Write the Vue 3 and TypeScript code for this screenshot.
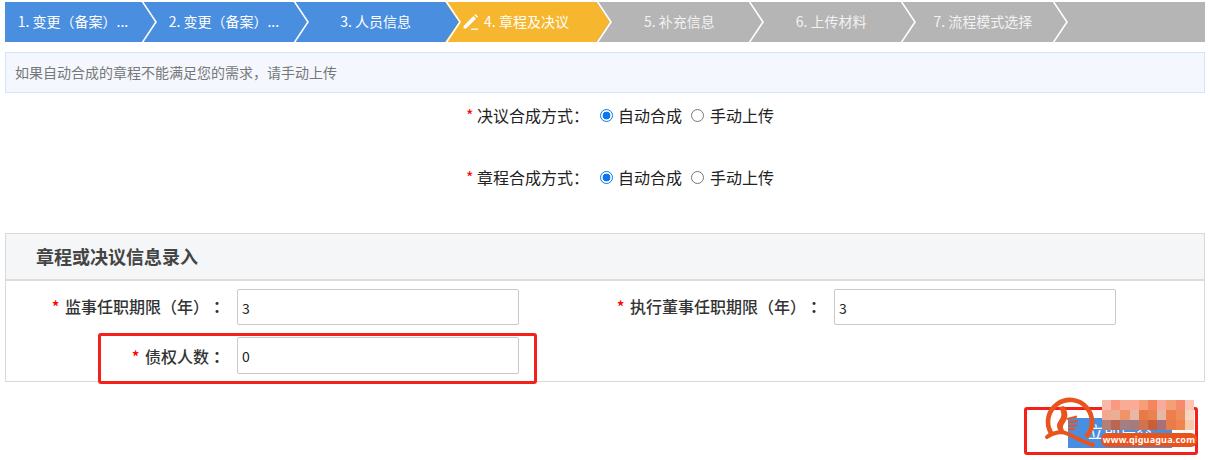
<script setup lang="ts">
interface Step { label: string; state: 'done' | 'active' | 'todo' }
const steps: Step[] = [
  { label: '1. 变更（备案）...', state: 'done' },
  { label: '2. 变更（备案）...', state: 'done' },
  { label: '3. 人员信息', state: 'done' },
  { label: '4. 章程及决议', state: 'active' },
  { label: '5. 补充信息', state: 'todo' },
  { label: '6. 上传材料', state: 'todo' },
  { label: '7. 流程模式选择', state: 'todo' },
]
const radios = ['决议合成方式：', '章程合成方式：']
const mosaic: string[] = [
  '#f9b9a8', '#f99a80', '#f9ab94', '#fbaa97', '#f59f78', '#f4855f', '#f8ab9b', '#f3a077', '#f58a6c', '#fbc4b4',
  '#f5a78e', '#e9ae96', '#f09368', '#e6b8a5', '#e87a4a', '#e9824f', '#e5b7a6', '#ee7e4b', '#f08c5c', '#fbd5bf',
  '#b47f77', '#bb6650', '#a37f85', '#a57a80', '#d07350', '#c95f38', '#a8707a', '#e87c48', '#f08450', '#f9c9ab',
]
</script>

<template>
  <div class="page">
    <div class="stepper">
      <div v-for="(s, i) in steps" :key="s.label" class="step" :class="[s.state, { first: i === 0 }]">
        <svg v-if="s.state === 'active'" class="pen" viewBox="0 0 16 16">
          <path d="M1.500 12.200 10.800 2.900l2.400 2.400-9.300 9.300H1.500z" fill="#fff" />
          <path d="M11.700 2l1-1 2.400 2.400-1 1z" fill="#fff" />
          <rect x="8.600" y="14.600" width="6.600" height="1.200" fill="#fff" />
        </svg>
        <span>{{ s.label }}</span>
        <svg class="tip" viewBox="0 0 16 40" preserveAspectRatio="none">
          <polygon points="0,0 14,20 0,40" class="tip-fill" />
          <polyline points="1,-1 15,20 1,41" fill="none" stroke="#fff" stroke-width="1.6" />
        </svg>
      </div>
      <div class="step-rest"></div>
    </div>

    <div class="notice">如果自动合成的章程不能满足您的需求，请手动上传</div>

    <div v-for="r in radios" :key="r" class="radio-row">
      <label class="radio-label"><i>*</i> {{ r }}</label>
      <span class="radio on"></span><span class="radio-text">自动合成</span>
      <span class="radio"></span><span class="radio-text">手动上传</span>
    </div>

    <section class="panel">
      <h3 class="panel-head">章程或决议信息录入</h3>
      <div class="form">
        <div class="field">
          <label class="field-label"><i>*</i> 监事任职期限（年）<b>：</b></label>
          <div class="input">3</div>
        </div>
        <div class="field">
          <label class="field-label"><i>*</i> 执行董事任职期限（年）<b>：</b></label>
          <div class="input">3</div>
        </div>
        <div class="field">
          <label class="field-label"><i>*</i> 债权人数<b>：</b></label>
          <div class="input">0</div>
        </div>
      </div>
    </section>

    <div class="actions"><button class="submit" type="button">立即提交</button></div>

    <div class="mark mark-a"></div>
    <div class="mark mark-b"></div>

    <div class="wm">
      <svg class="wm-logo" viewBox="0 0 60 60">
        <path d="M11 37A22 22 0 1 1 46 41" fill="none" stroke="#e8541c" stroke-width="4.600" />
        <path d="M7 41C13 36 22 35 28 38 36 42 44 46 53 49" fill="none" stroke="#e8541c" stroke-width="4" stroke-linecap="round" />
        <path d="M19 11l5-1c3 4 4 8 3 12-1 4-4 6-4 9 0 2 1 4 3 6l-3 1c-4-2-6-5-6-8 0-4 3-6 4-9 1-3 0-6-2-10z" fill="#e8541c" />
        <path d="M27 23l10-2.500M28 26.500l10-1.500M28 30l9-.5M28 33.500l7-.5" fill="none" stroke="#e8541c" stroke-width="2" />
      </svg>
      <div class="wm-tile">
        <span v-for="(c, i) in mosaic" :key="i" :style="{ background: c }"></span>
      </div>
      <div class="wm-pill">www.qiguagua.com</div>
    </div>
  </div>
</template>

<style scoped>
.page {
  position: relative;
  width: 1210px;
  height: 460px;
  overflow: hidden;
  padding: 2px 5px 0;
  box-sizing: border-box;
  background: #fff;
  font-family: "Noto Sans CJK SC", "Liberation Sans", sans-serif;
  font-size: 16px;
  color: #333;
  text-spacing-trim: space-all;
}
.stepper {
  display: flex;
  height: 40px;
  background: #b5b5b5;
}
.step {
  position: relative;
  width: 151.8px;
  padding: 0 0 2px 14px;
  box-sizing: border-box;
  display: flex;
  align-items: center;
  justify-content: center;
  color: #fff;
  font-size: 14px;
  flex: none;
}
.step.first { width: 136px; padding-left: 0; }
.step.done { background: #4a8ee0; --c: #4a8ee0; }
.step.active { background: #f6b62e; --c: #f6b62e; padding-right: 24px; }
.step.todo { background: #b5b5b5; --c: #b5b5b5; color: #f2f2f2; }
.step:nth-child(1) { z-index: 7; }
.step:nth-child(2) { z-index: 6; }
.step:nth-child(3) { z-index: 5; }
.step:nth-child(4) { z-index: 4; }
.step:nth-child(5) { z-index: 3; }
.step:nth-child(6) { z-index: 2; }
.step:nth-child(7) { z-index: 1; }
.step-rest { flex: 1; }
.tip {
  position: absolute;
  left: 100%;
  top: 0;
  width: 16px;
  height: 40px;
  overflow: hidden;
}
.tip-fill { fill: var(--c); }
.pen { width: 17px; height: 17px; margin-right: 5px; }
.notice {
  margin-top: 10px;
  height: 41px;
  line-height: 38px;
  box-sizing: border-box;
  border: 1px solid #d3e5fa;
  background: #f4f8fe;
  padding-left: 9px;
  font-size: 14px;
  color: #777;
}
.radio-row {
  display: flex;
  align-items: center;
  height: 46px;
  margin-bottom: 16px;
  padding: 0 0 2px 461px;
  box-sizing: border-box;
  color: #222;
}
.radio-row i, .field-label i { color: #f00; font-style: normal; }
.field-label i { margin-right: 2px; }
.radio-label { width: 134px; }
.radio {
  width: 13px;
  height: 13px;
  border: 1px solid #777;
  border-radius: 50%;
  box-sizing: border-box;
  margin-right: 5px;
}
.radio.on {
  border: 1px solid #0b76ef;
  background: radial-gradient(circle, #0b76ef 0 3.6px, #fff 4.2px);
}
.radio-text { margin-right: 9px; }
.radio + .radio-text + .radio { margin-right: 6px; }
.panel {
  margin-top: 32px;
  height: 149px;
  box-sizing: border-box;
  border: 1px solid #d9d9d9;
}
.panel-head {
  margin: 0;
  height: 47px;
  line-height: 44px;
  box-sizing: border-box;
  padding-left: 30px;
  font-size: 18px;
  font-weight: 700;
  color: #444;
  background: #f5f6f8;
  border-bottom: 2px solid #dcdcdc;
}
.form {
  display: grid;
  grid-template-columns: 597px 1fr;
  row-gap: 12px;
  padding-top: 8px;
}
.field { display: flex; align-items: center; }
.field-label {
  width: 231px;
  flex: none;
  padding-right: 12px;
  padding-bottom: 2px;
  box-sizing: border-box;
  text-align: right;
  font-weight: 500;
  white-space: nowrap;
}
.field-label b { font-family: "Noto Sans CJK TC", sans-serif; font-weight: 700; }
.field:nth-child(3) .field-label { padding-bottom: 0; }
.input {
  width: 282px;
  height: 36px;
  box-sizing: border-box;
  border: 1px solid #c9c9c9;
  border-radius: 2px;
  padding-left: 4px;
  line-height: 36px;
  font-size: 14px;
  color: #222;
}
.field:nth-child(3) .input { height: 37px; }
.actions { display: flex; justify-content: flex-end; padding: 36px 33px 0 0; }
.submit {
  width: 104px;
  height: 30px;
  border: 0;
  background: #4a8ee0;
  color: #fff;
  font-family: inherit;
  font-size: 16px;
  line-height: 26px;
  padding: 0 0 6px;
}
.mark {
  position: absolute;
  border: 3px solid #f5201a;
  border-radius: 3px;
  box-sizing: border-box;
}
.mark-a { left: 98px; top: 333px; width: 439px; height: 51px; }
.mark-b { left: 1024px; top: 407px; width: 174px; height: 48px; }
.wm { position: absolute; left: 1040px; top: 396px; width: 160px; height: 60px; }
.wm-logo { position: absolute; left: 0; top: 0; width: 60px; height: 60px; }
.wm-tile {
  position: absolute;
  left: 62px;
  top: 4px;
  width: 92px;
  height: 30px;
  display: grid;
  grid-template-columns: repeat(10, 1fr);
  grid-template-rows: repeat(3, 1fr);
}
.wm-pill {
  position: absolute;
  left: 61px;
  top: 37px;
  width: 96px;
  height: 14px;
  border-radius: 6px;
  background: #e8541c;
  color: #fff;
  font: 700 9px/14px "Noto Sans", sans-serif;
  letter-spacing: 0.2px;
  text-align: center;
  white-space: nowrap;
}
</style>
